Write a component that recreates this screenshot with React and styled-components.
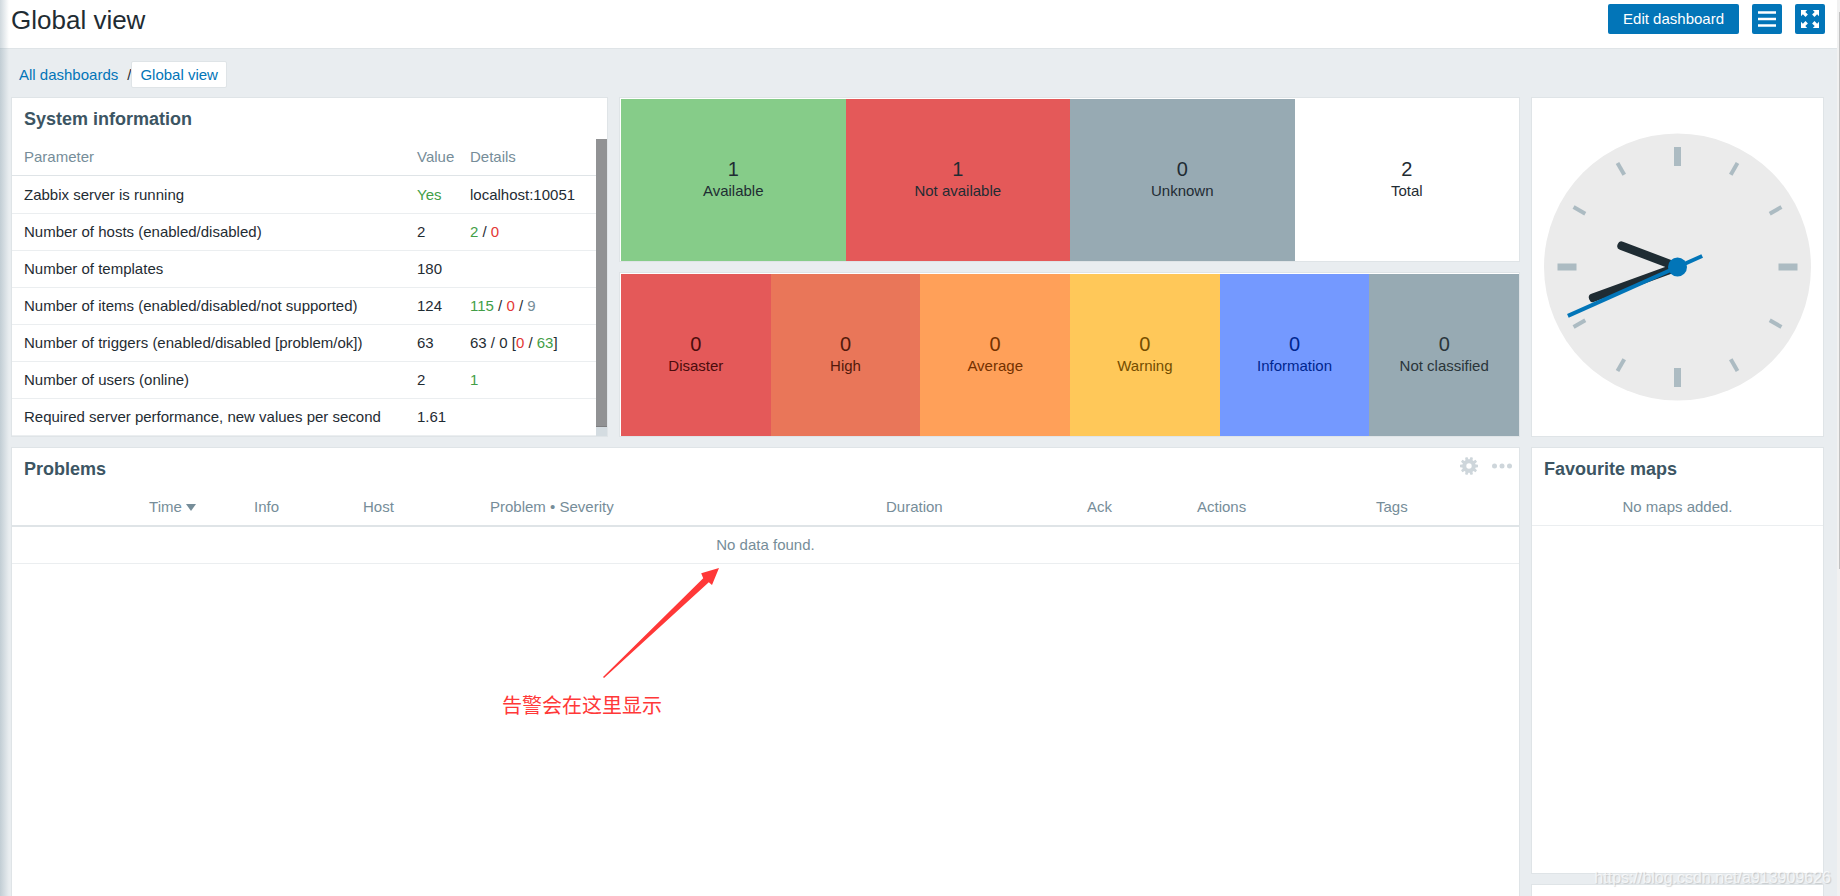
import styled, { createGlobalStyle } from "styled-components";

const systemInfo = [
  { name: "Zabbix server is running", value: [["Yes", "green"]], details: [["localhost:10051"]] },
  { name: "Number of hosts (enabled/disabled)", value: [["2"]], details: [["2", "green"], [" / "], ["0", "red"]] },
  { name: "Number of templates", value: [["180"]], details: [] },
  {
    name: "Number of items (enabled/disabled/not supported)",
    value: [["124"]],
    details: [["115", "green"], [" / "], ["0", "red"], [" / "], ["9", "grey"]],
  },
  {
    name: "Number of triggers (enabled/disabled [problem/ok])",
    value: [["63"]],
    details: [["63 / 0 ["], ["0", "red"], [" / "], ["63", "green"], ["]"]],
  },
  { name: "Number of users (online)", value: [["2"]], details: [["1", "green"]] },
  { name: "Required server performance, new values per second", value: [["1.61"]], details: [] },
];

const hosts = [
  { count: 1, label: "Available", bg: "#86cc89", color: "#1f2c33" },
  { count: 1, label: "Not available", bg: "#e45959", color: "#1f2c33" },
  { count: 0, label: "Unknown", bg: "#97aab3", color: "#1f2c33" },
  { count: 2, label: "Total", bg: "#ffffff", color: "#1f2c33" },
];

const severities = [
  { count: 0, label: "Disaster", bg: "#e45959", color: "#4b0c0c" },
  { count: 0, label: "High", bg: "#e97659", color: "#52190b" },
  { count: 0, label: "Average", bg: "#ffa059", color: "#733100" },
  { count: 0, label: "Warning", bg: "#ffc859", color: "#734d00" },
  { count: 0, label: "Information", bg: "#7499ff", color: "#00268e" },
  { count: 0, label: "Not classified", bg: "#97aab3", color: "#2a353a" },
];

const textColors = {
  green: "#429e47",
  red: "#e33734",
  grey: "#768d99",
};

function Parts({ items }) {
  return items.map(([text, color], i) => (
    <Colored key={i} $color={textColors[color]}>{text}</Colored>
  ));
}

function MenuIcon() {
  return (
    <svg width="18" height="18" viewBox="0 0 18 18" fill="#fff" aria-hidden="true">
      <path d="M0 1.2h18v2.5H0zM0 7.7h18v2.5H0zM0 14.2h18v2.5H0z" />
    </svg>
  );
}

function FullscreenIcon() {
  const arrow = "M0 0h6.2L4.3 1.9l2.6 2.6-2.4 2.4-2.6-2.6L0 6.2z";
  return (
    <svg width="18" height="18" viewBox="0 0 18 18" fill="#fff" aria-hidden="true">
      <path d={arrow} />
      <path d={arrow} transform="rotate(90 9 9)" />
      <path d={arrow} transform="rotate(180 9 9)" />
      <path d={arrow} transform="rotate(270 9 9)" />
    </svg>
  );
}

function GearIcon() {
  return (
    <svg width="18" height="18" viewBox="-9 -9 18 18" aria-hidden="true">
      <circle r="4.7" fill="none" stroke="#ced6db" strokeWidth="4" />
      {[...Array(10)].map((_, i) => (
        <path key={i} d="M5.5 -1.7L9 -1.2V1.2L5.5 1.7z" fill="#ced6db" transform={`rotate(${i * 36})`} />
      ))}
    </svg>
  );
}

function DotsIcon() {
  return (
    <svg width="20" height="18" viewBox="0 0 20 18" fill="#ced6db" aria-hidden="true">
      <circle cx="2.5" cy="9" r="2.5" />
      <circle cx="10" cy="9" r="2.5" />
      <circle cx="17.5" cy="9" r="2.5" />
    </svg>
  );
}

function Clock() {
  return (
    <ClockFace viewBox="-133.5 -133.5 267 267" role="img" aria-label="Clock">
      <circle r="133.5" fill="#ebebeb" />
      {[...Array(12)].map((_, i) =>
        i % 3 === 0 ? (
          <rect key={i} x="-3.5" y="-120" width="7" height="19" fill="#acbbc2" transform={`rotate(${i * 30})`} />
        ) : (
          <rect key={i} x="-2" y="-120" width="4" height="13.5" fill="#acbbc2" transform={`rotate(${i * 30})`} />
        )
      )}
      <rect x="-4.3" y="-64" width="8.6" height="68" rx="4" fill="#1f2c33" transform="rotate(290.8)" />
      <rect x="-4.3" y="-94" width="8.6" height="98" rx="4" fill="#1f2c33" transform="rotate(250)" />
      <rect x="-2" y="-120" width="4" height="147" fill="#0275b8" transform="rotate(246)" />
      <circle r="9.5" fill="#0275b8" />
    </ClockFace>
  );
}

function Tiles({ items }) {
  return (
    <TileRow>
      {items.map((item) => (
        <Tile key={item.label} $bg={item.bg} $color={item.color}>
          <TileCount>{item.count}</TileCount>
          <TileLabel>{item.label}</TileLabel>
        </Tile>
      ))}
    </TileRow>
  );
}

function SystemInformation() {
  return (
    <Widget $cols={4} $rows={2}>
      <WidgetHead>
        <WidgetTitle>System information</WidgetTitle>
      </WidgetHead>
      <ScrollArea>
        <Table>
          <colgroup>
            <col />
            <Col $width={53} />
            <Col $width={132} />
          </colgroup>
          <thead>
            <tr>
              <Th>Parameter</Th>
              <Th>Value</Th>
              <Th>Details</Th>
            </tr>
          </thead>
          <tbody>
            {systemInfo.map((row) => (
              <InfoRow key={row.name}>
                <Td>{row.name}</Td>
                <Td><Parts items={row.value} /></Td>
                <Td><Parts items={row.details} /></Td>
              </InfoRow>
            ))}
          </tbody>
        </Table>
        <WidgetScroll>
          <WidgetThumb />
        </WidgetScroll>
      </ScrollArea>
    </Widget>
  );
}

function Problems() {
  return (
    <Widget $cols={10} $rows={2}>
      <WidgetHead>
        <WidgetTitle>Problems</WidgetTitle>
        <WidgetActions>
          <IconButton type="button" aria-label="Edit"><GearIcon /></IconButton>
          <IconButton type="button" aria-label="Actions"><DotsIcon /></IconButton>
        </WidgetActions>
      </WidgetHead>
      <Table>
        <colgroup>
          <Col $width={190} />
          <Col $width={46} />
          <Col $width={109} />
          <Col $width={127} />
          <Col $width={396} />
          <Col $width={201} />
          <Col $width={110} />
          <Col $width={179} />
          <Col $width={149} />
        </colgroup>
        <thead>
          <tr>
            <Th $heavy $align="right">Time <SortArrow /></Th>
            <Th $heavy />
            <Th $heavy>Info</Th>
            <Th $heavy>Host</Th>
            <Th $heavy>Problem • Severity</Th>
            <Th $heavy>Duration</Th>
            <Th $heavy>Ack</Th>
            <Th $heavy>Actions</Th>
            <Th $heavy>Tags</Th>
          </tr>
        </thead>
        <tbody>
          <tr>
            <EmptyTd colSpan={9}>No data found.</EmptyTd>
          </tr>
        </tbody>
      </Table>
      <Note>
        <svg width="120" height="112" viewBox="0 0 120 112" aria-hidden="true">
          <path d="M1 110L101.2 11.3 99.2 6.3 117 1 110 18 106.8 15.3 2 111z" fill="#ff3838" />
        </svg>
        <NoteText>告警会在这里显示</NoteText>
      </Note>
    </Widget>
  );
}

function App() {
  return (
    <Page>
      <GlobalStyle />
      <Content>
        <Header>
          <Title>Global view</Title>
          <Controls>
            <EditButton type="button">Edit dashboard</EditButton>
            <SquareButton type="button" aria-label="Actions"><MenuIcon /></SquareButton>
            <SquareButton type="button" aria-label="Fullscreen"><FullscreenIcon /></SquareButton>
          </Controls>
        </Header>
        <Breadcrumbs>
          <Crumb href="#dashboards">All dashboards</Crumb>
          <span>/</span>
          <Crumb href="#global" $selected>Global view</Crumb>
        </Breadcrumbs>
        <Dashboard>
          <SystemInformation />
          <Widget $cols={6} $rows={1}>
            <Tiles items={hosts} />
          </Widget>
          <Widget $cols={2} $rows={2}>
            <Clock />
          </Widget>
          <Widget $cols={6} $rows={1}>
            <Tiles items={severities} />
          </Widget>
          <Problems />
          <Widget $cols={2} $rows={1}>
            <WidgetHead>
              <WidgetTitle>Favourite maps</WidgetTitle>
            </WidgetHead>
            <EmptyRow>No maps added.</EmptyRow>
          </Widget>
          <Widget $cols={2} $rows={1} />
        </Dashboard>
      </Content>
      <PageScroll>
        <PageThumb />
      </PageScroll>
      <Watermark>https://blog.csdn.net/a913909626</Watermark>
    </Page>
  );
}

export default App;

const GlobalStyle = createGlobalStyle`
  * {
    box-sizing: border-box;
  }
  body {
    margin: 0;
    background: #e9edf0;
    color: #1f2c33;
    font-family: "Liberation Sans", Arial, "Noto Sans CJK SC", sans-serif;
    font-size: 15px;
    line-height: 18px;
  }
  button {
    font: inherit;
    border: 0;
    padding: 0;
    cursor: pointer;
  }
`;

const Page = styled.div`
  position: relative;
  display: flex;
  height: 100vh;
  overflow: hidden;

  /* shadow of the side menu */
  &::before {
    content: "";
    position: absolute;
    top: 0;
    bottom: 0;
    left: 0;
    width: 9px;
    background: linear-gradient(to right, rgba(120, 145, 160, 0.35), rgba(120, 145, 160, 0));
  }
`;

const Content = styled.main`
  flex: 1;
  min-width: 0;
`;

const Header = styled.header`
  display: flex;
  justify-content: space-between;
  align-items: flex-start;
  height: 49px;
  padding: 4px 12px 0 11px;
  background: #fff;
  border-bottom: 1px solid #dfe4e7;
`;

const Title = styled.h1`
  margin: 0;
  font-size: 26px;
  font-weight: normal;
  line-height: 32px;
`;

const Controls = styled.div`
  display: flex;
  gap: 13px;
`;

const EditButton = styled.button`
  height: 30px;
  padding: 0 15px;
  background: #0275b8;
  color: #fff;
  border-radius: 2px;
`;

const SquareButton = styled(EditButton)`
  display: flex;
  align-items: center;
  justify-content: center;
  width: 30px;
  padding: 0;
`;

const Breadcrumbs = styled.nav`
  display: flex;
  align-items: center;
  padding: 12px 10px 9px;
`;

const Crumb = styled.a`
  padding: 4px 8px;
  border: 1px solid ${(props) => (props.$selected ? "#dfe4e7" : "transparent")};
  border-radius: 2px;
  background: ${(props) => (props.$selected ? "#fff" : "transparent")};
  color: #0275b8;
  line-height: 17px;
  text-decoration: none;
`;

const Dashboard = styled.div`
  display: grid;
  grid-template-columns: repeat(12, minmax(0, 1fr));
  grid-template-rows: 165px 165px 427px 165px;
  gap: 10px 11px;
  padding: 0 13px 0 11px;
`;

const Widget = styled.section`
  position: relative;
  display: flex;
  flex-direction: column;
  grid-column: span ${(props) => props.$cols};
  grid-row: span ${(props) => props.$rows};
  background: #fff;
  border: 1px solid #dfe4e7;
`;

const WidgetHead = styled.div`
  display: flex;
  justify-content: space-between;
  height: 41px;
  padding: 0 7px 0 12px;
`;

const WidgetTitle = styled.h4`
  margin: 0;
  color: #3c5563;
  font-size: 18px;
  line-height: 42px;
`;

const WidgetActions = styled.div`
  display: flex;
  align-items: flex-start;
  gap: 14px;
  padding-top: 9px;
`;

const IconButton = styled.button`
  display: flex;
  background: none;
`;

const ScrollArea = styled.div`
  flex: 1;
  display: flex;
  min-height: 0;
`;

const WidgetScroll = styled.div`
  flex: none;
  width: 11px;
  background: #d4dce1;
`;

const WidgetThumb = styled.div`
  height: 97%;
  background: #919294;
  border-bottom: 1px solid #7d7e80;
`;

const Table = styled.table`
  width: 100%;
  table-layout: fixed;
  border-spacing: 0;
`;

const Col = styled.col`
  width: ${(props) => props.$width}px;
`;

const Th = styled.th`
  height: ${(props) => (props.$heavy ? 38 : 37)}px;
  padding: 0 6px;
  border-bottom: ${(props) => (props.$heavy ? 2 : 1)}px solid #dfe4e7;
  color: #768d99;
  font-weight: normal;
  text-align: ${(props) => props.$align || "left"};
  white-space: nowrap;

  &:first-child {
    padding-left: 12px;
  }
`;

const Td = styled.td`
  height: 37px;
  padding: 0 6px;
  border-bottom: 1px solid #ebeef0;
  white-space: nowrap;

  &:first-child {
    padding-left: 12px;
  }
`;

const InfoRow = styled.tr`
  &:first-child {
    height: 38px;
  }
`;

const EmptyTd = styled(Td)`
  color: #768d99;
  text-align: center;

  &:first-child {
    padding: 0;
  }
`;

const EmptyRow = styled.div`
  padding: 9px 0 9px;
  border-bottom: 1px solid #ebeef0;
  color: #768d99;
  text-align: center;
`;

const Colored = styled.span`
  color: ${(props) => props.$color || "inherit"};
  white-space: pre;
`;

const SortArrow = styled.span`
  display: inline-block;
  border: 5px solid transparent;
  border-top: 7px solid #768d99;
  border-bottom: 0;
  vertical-align: 1px;
`;

const TileRow = styled.div`
  flex: 1;
  display: flex;
  padding: 1px 0 0 1px;
`;

const Tile = styled.div`
  flex: 1 1 0;
  display: flex;
  flex-direction: column;
  align-items: center;
  justify-content: center;
  padding-bottom: 4px;
  background: ${(props) => props.$bg};
  color: ${(props) => props.$color};
`;

const TileCount = styled.span`
  font-size: 20px;
  line-height: 26px;
`;

const TileLabel = styled.span`
  line-height: 18px;
`;

const ClockFace = styled.svg`
  width: 100%;
  height: 100%;
  padding: 12px;
`;

/* hand-drawn remark over the problems list */
const Note = styled.div`
  position: absolute;
  top: 119px;
  left: 490px;
  display: flex;
  flex-direction: column;
  align-items: flex-end;
  width: 220px;
`;

const NoteText = styled.span`
  align-self: flex-start;
  margin-top: 12px;
  color: #ff3838;
  font-family: "Noto Sans CJK SC", sans-serif;
  font-size: 20px;
  line-height: 28px;
`;

const PageScroll = styled.div`
  flex: none;
  width: 3px;
  padding: 12px 0 0 2px;
  background: #f1f1f1;
`;

const PageThumb = styled.div`
  height: 63%;
  background: #c1c1c1;
`;

const Watermark = styled.span`
  position: absolute;
  right: 9px;
  bottom: 9px;
  color: rgba(255, 255, 255, 0.7);
  font-size: 16px;
  text-shadow: 1px 1px 1px rgba(0, 0, 0, 0.15);
`;
